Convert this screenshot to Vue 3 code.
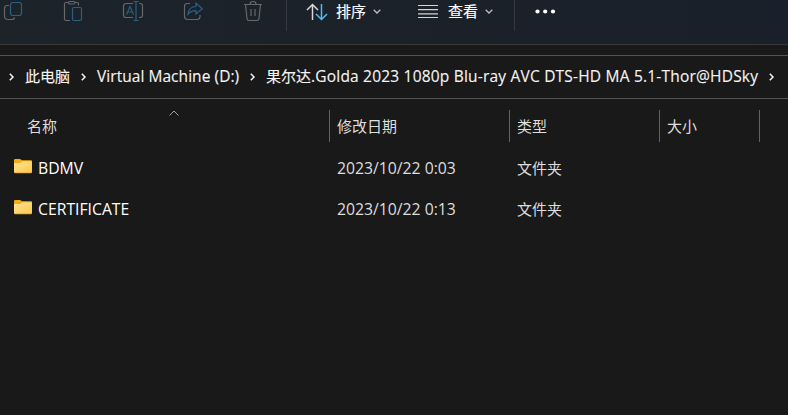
<script setup>
const columns = ['名称', '修改日期', '类型', '大小']
const rows = [
  { name: 'BDMV', date: '2023/10/22 0:03', type: '文件夹' },
  { name: 'CERTIFICATE', date: '2023/10/22 0:13', type: '文件夹' },
]
</script>

<template>
  <main class="explorer">
    <header class="toolbar">
      <div class="actions">
        <svg class="icon" viewBox="0 0 24 24">
          <path class="gray" d="M9 5.500H7.500Q4.500 5.500 4.500 8.500V16Q4.500 19.500 8 19.500H11.500Q14.500 19.500 14.500 17.500" />
          <rect class="blue" x="10.500" y="2.500" width="11" height="13" rx="2.500" />
        </svg>
        <svg class="icon" viewBox="0 0 24 24">
          <path class="gray" d="M8 2.500H6Q4.500 2.500 4.500 4V19Q4.500 20.500 6 20.500H10M15 2.500H17.500Q18.500 2.500 18.500 4V5.500" />
          <rect class="gray" x="8.500" y="1.500" width="6.500" height="2.500" rx="1.200" />
          <rect class="blue" x="12.500" y="7.500" width="9" height="13" rx="1.500" />
        </svg>
        <svg class="icon" viewBox="0 0 24 24">
          <path class="gray" d="M13 3.500H6Q3.500 3.500 3.500 6V15Q3.500 17.500 6 17.500H13M19 3.500H20Q22.500 3.500 22.500 6V15Q22.500 17.500 20 17.500H19" />
          <path class="blue" d="M6.500 14.500L10 6.500L13.500 14.500M7.700 12H12.300M16 1.500V20.500M13.500 1.500H18.500M13.500 20.500H18.500" />
        </svg>
        <svg class="icon" viewBox="0 0 24 24">
          <path class="gray" d="M10 3.500H7.500Q4.500 3.500 4.500 6.500V16.500Q4.500 19.500 7.500 19.500H17Q20 19.500 20 16.500V15" />
          <path class="blue" d="M8 14.500Q8.500 6.500 16 6.500V3L22.200 8.700L16 14V10.700Q11 10.500 8 14.500Z" />
        </svg>
        <svg class="icon" viewBox="0 0 24 24">
          <path class="gray" d="M4 4.500H22M10 4.500Q10 1.500 13 1.500T16 4.500M5.500 4.500L7 18.500Q7.200 20.500 9 20.500H17Q18.800 20.500 19 18.500L20.500 4.500M11 9V16M15 9V16" />
        </svg>
      </div>
      <div class="group sort">
        <svg class="sort-icon" viewBox="0 0 22 18">
          <path class="up" d="M6.500 17V2M1 7L6.500 1.500L12 7" />
          <path class="down" d="M15.500 1V16M10 11L15.500 16.500L21 11" />
        </svg>
        <span>排序</span>
        <svg class="drop" viewBox="0 0 8 5"><path d="M.7.8L4 4L7.300.8" /></svg>
      </div>
      <div class="group view">
        <svg class="lines" viewBox="0 0 20 14"><path d="M0 .5H20M0 4.700H20M0 8.800H20M0 12.500H20" /></svg>
        <span>查看</span>
        <svg class="drop" viewBox="0 0 8 5"><path d="M.7.8L4 4L7.300.8" /></svg>
      </div>
      <svg class="more" viewBox="0 0 20 5">
        <circle cx="2.500" cy="2.500" r="2.100" />
        <circle cx="10.200" cy="2.500" r="2.100" />
        <circle cx="18" cy="2.500" r="2.100" />
      </svg>
    </header>
    <nav class="address">
      <svg class="chev" viewBox="0 0 5 8"><path d="M.8.8L4 4L.8 7.200" /></svg>
      <span class="crumb pc">此电脑</span>
      <svg class="chev" viewBox="0 0 5 8"><path d="M.8.8L4 4L.8 7.200" /></svg>
      <span class="crumb disk"><span class="latin">Virtual Machine (D:)</span></span>
      <svg class="chev" viewBox="0 0 5 8"><path d="M.8.8L4 4L.8 7.200" /></svg>
      <span class="crumb folder-name">果尔达<span class="latin long">.Golda 2023 1080p Blu-ray AVC DTS-HD MA 5.1-Thor@HDSky</span></span>
      <svg class="chev" viewBox="0 0 5 8"><path d="M.8.8L4 4L.8 7.200" /></svg>
    </nav>
    <section class="list">
      <div class="grid head">
        <div v-for="(c, i) in columns" :key="c" class="th">
          <span>{{ c }}</span>
          <svg v-if="i === 0" class="asc" viewBox="0 0 10 6"><path d="M.5 5.500L5 1L9.500 5.500" /></svg>
        </div>
      </div>
      <div v-for="r in rows" :key="r.name" class="grid row">
        <div class="file">
          <svg class="folder" viewBox="0 0 18 15">
            <defs>
              <linearGradient id="folder-face" x1="0" y1="0" x2="1" y2="1">
                <stop offset="0" stop-color="#ffe394" />
                <stop offset="1" stop-color="#fbc84b" />
              </linearGradient>
            </defs>
            <path fill="#f3ad12" d="M0 1.200Q0 0 1.200 0H6L8 1.300H17Q18 1.300 18 2.300V8H0Z" />
            <path fill="url(#folder-face)" d="M0 4H6.500L8.200 2.200H17Q18 2.200 18 3.200V13.200Q18 14 17 14H1Q0 14 0 13Z" />
            <path fill="#dda32e" d="M.2 13.400H17.800Q17.500 14.200 17 14.200H1Q.4 14.200 .2 13.400Z" />
          </svg>
          <span class="name">{{ r.name }}</span>
        </div>
        <div class="date">{{ r.date }}</div>
        <div class="type">{{ r.type }}</div>
      </div>
    </section>
  </main>
</template>

<style>
body { background: #191919; }
</style>
<style scoped>
.explorer {
  width: 788px; height: 415px; overflow: hidden; box-sizing: border-box;
  background: #191919; color: #fff;
  font: 15px/20px "Open Sans", "Noto Sans CJK SC", sans-serif;
  white-space: nowrap;
}
svg { display: block; flex: none; fill: none; overflow: visible; }
.toolbar {
  height: 45px; box-sizing: border-box; border-bottom: 1px solid #3b3939;
  background: linear-gradient(90deg, #1c2329, #1b2129 60%, #1a202b);
  display: flex; align-items: flex-start;
}
.actions {
  display: flex; gap: 36px; width: 287px; height: 31px; box-sizing: border-box;
  border-right: 1px solid #343a40;
}
.icon { width: 24px; height: 24px; stroke-width: 1.2; }
.gray { stroke: #63686b; }
.blue { stroke: #286183; }
.group { display: flex; align-items: center; height: 23px; }
.group span { padding-bottom: 2px; -webkit-text-stroke: .15px #fff; }
.sort { padding-left: 19px; }
.sort-icon { width: 22px; height: 18px; margin-right: 8px; stroke-width: 1.5; }
.up { stroke: #d5d8da; }
.down { stroke: #4cbcf5; }
.drop { width: 8px; height: 5px; margin-left: 7px; stroke: #b9bdc0; stroke-width: 1.3; }
.view { width: 134px; height: 31px; padding: 0 0 8px 37px; box-sizing: border-box; border-right: 1px solid #343a40; }
.lines { width: 20px; height: 14px; margin-right: 10px; stroke: #d2d4d5; stroke-width: 1.2; }
.more { width: 20px; height: 5px; margin: 9px 0 0 20px; fill: #fff; }
.address {
  height: 44px; box-sizing: border-box; margin-top: 10px; padding-left: 9px;
  border: solid #535353; border-width: 1px 0; display: flex; align-items: center;
}
.chev { width: 5px; height: 8px; stroke: #f4f4f4; stroke-width: 1.5; }
.crumb {
  box-sizing: border-box; flex: none; padding: 0 0 2px 11px; color: #f5f5f5;
  -webkit-text-stroke: .12px #f5f5f5;
}
.pc { width: 67px; }
.disk { width: 164px; }
.folder-name { width: 514px; }
.latin { font-size: 15.500px; letter-spacing: .05px; }
.long { letter-spacing: .2px; }
.grid { display: grid; grid-template-columns: 330px 180px 150px 100px; }
.head { padding-top: 11px; color: #dedede; }
.th {
  height: 32px; box-sizing: border-box; border-right: 1px solid #636363;
  display: flex; align-items: center; padding-left: 7px;
}
.th:first-child { padding-left: 27px; }
.asc { width: 10px; height: 6px; margin: 0 0 26px 112px; stroke: #a0a0a0; stroke-width: 1; }
.row { height: 41px; align-items: center; }
.head + .row { margin-top: 5px; }
.file { display: flex; align-items: center; padding-left: 14px; }
.folder { width: 18px; height: 15px; margin: 0 6px 3px 0; }
.name, .date { font-size: 15.750px; }
.date, .type { padding-left: 7px; color: #dedede; }
</style>
